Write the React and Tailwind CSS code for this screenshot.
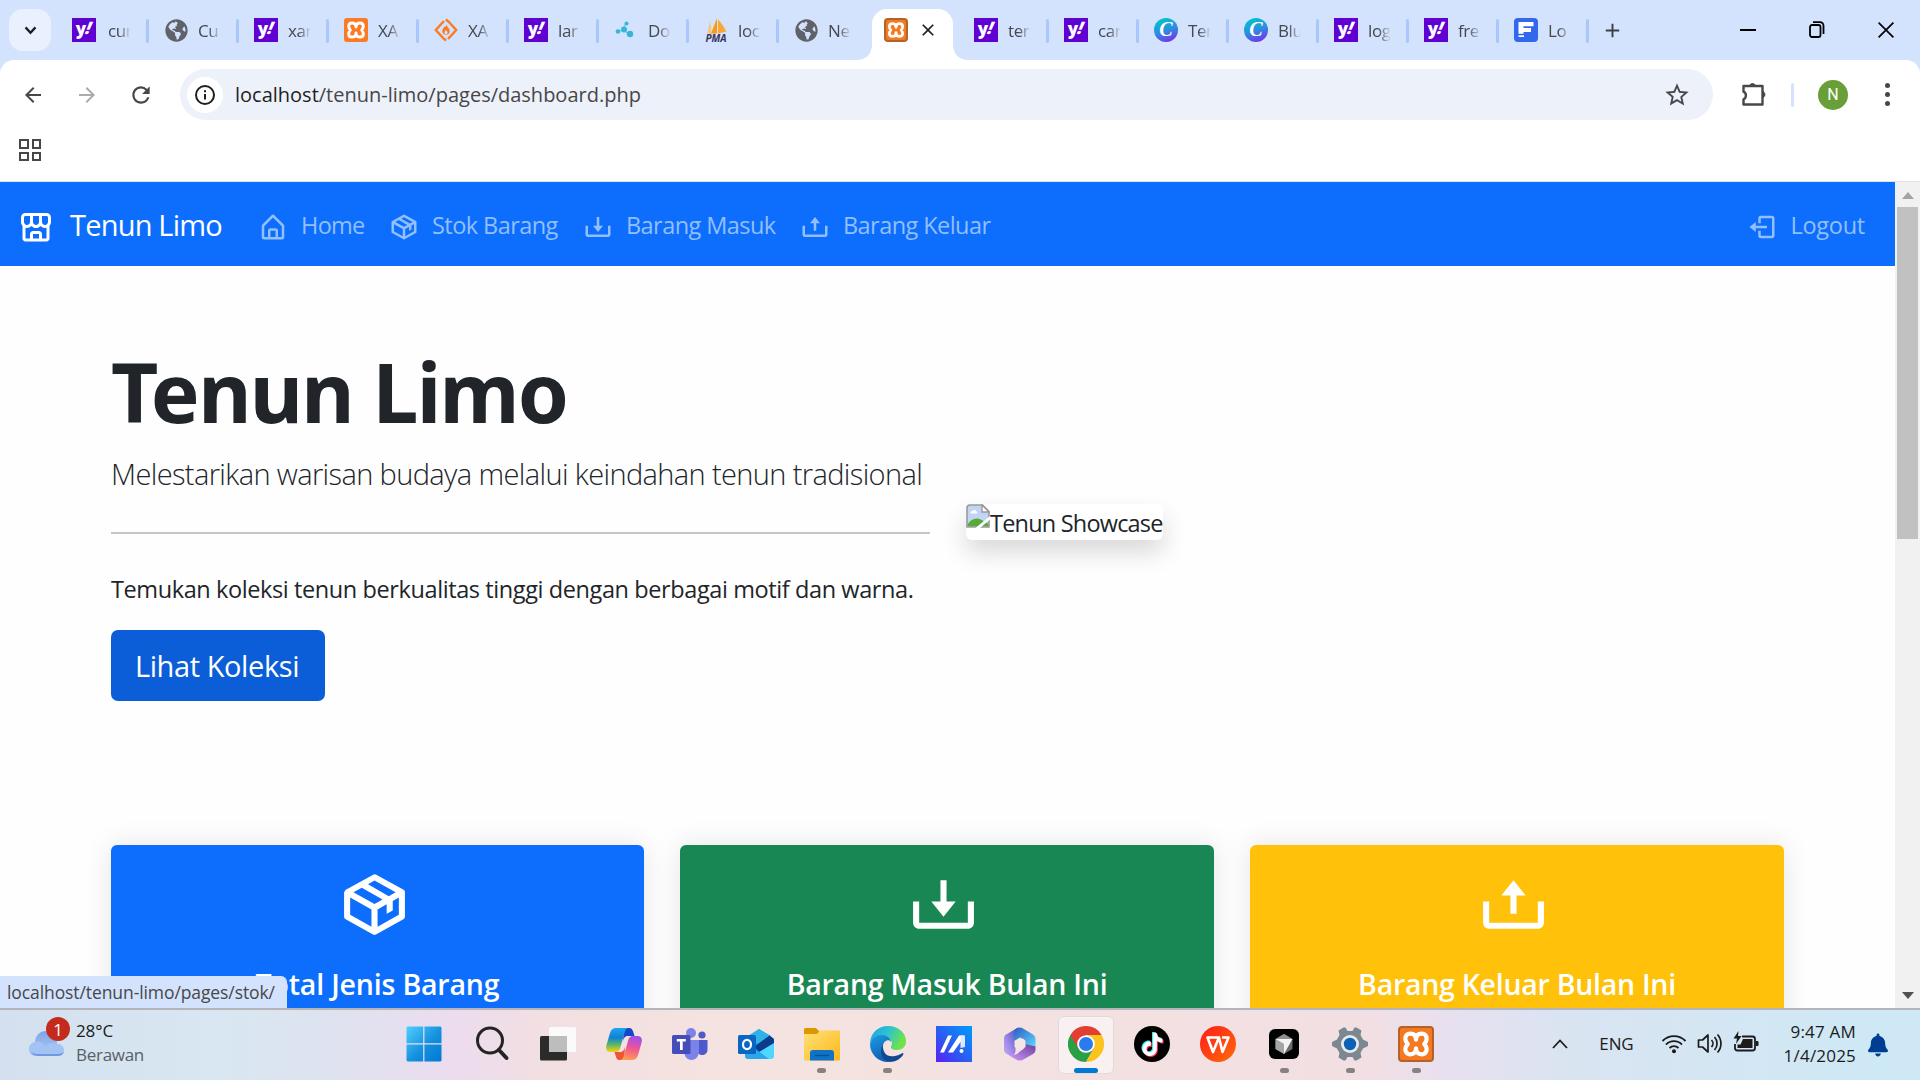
import React from "react";
import { BiStoreAlt, BiHomeAlt, BiPackage, BiDownload, BiUpload, BiLogOut } from "react-icons/bi";
import { FaGlobeAmericas, FaBell } from "react-icons/fa";
import { SiTiktok } from "react-icons/si";
import { MdArrowBack, MdArrowForward, MdRefresh, MdStarBorder, MdAdd, MdClose } from "react-icons/md";

/* ---------- favicons ---------- */

const Yahoo = () => (
  <span className="flex size-6 items-center justify-center bg-[#5f01d1] pb-[3px] pr-0.5 text-[17px] font-extrabold leading-none tracking-[-0.5px] text-white">
    y<i className="-skew-x-12 pb-0.5">!</i>
  </span>
);

const Globe = () => <FaGlobeAmericas className="size-[23px] text-[#5f6368]" />;

const XamppMark = () => (
  <svg viewBox="0 0 24 24" className="size-full" fill="none">
    <path
      d="M12 8.800C12 5.500 10 4.300 7.700 4.300 5.200 4.300 4 6 4 8c0 1.800.9 3 1.800 4C4.900 13 4 14.200 4 16c0 2.300 1.500 3.700 3.700 3.700 2.300 0 4.300-1.200 4.300-4.500 0 3.300 2 4.500 4.300 4.500 2.200 0 3.700-1.400 3.700-3.700 0-1.800-.9-3-1.800-4 .9-1 1.800-2.200 1.800-4 0-2-1.200-3.700-3.700-3.700C14 4.300 12 5.500 12 8.800z"
      stroke="#fff"
      strokeWidth="3.200"
      strokeLinejoin="round"
    />
  </svg>
);

const XamppFlat = () => (
  <span className="flex size-6 items-center justify-center rounded-[3px] bg-[#fb7a24] p-px">
    <XamppMark />
  </span>
);

function XamppGlossy({ className }) {
  return (
    <span className={"flex items-center justify-center rounded-[4px] border-2 border-[#b4622a] bg-[#f47920] " + className}>
      <XamppMark />
    </span>
  );
}

const Diamond = () => (
  <svg viewBox="0 0 24 24" className="size-6" fill="none">
    <path d="M10 3 1.8 12 10 21M14 3l8.2 9-8.2 9M12 1.4l2 2M12 22.6l-2-2" stroke="#fb7a24" strokeWidth="2.4" />
    <path d="M12.5 6.5c.6 2.6 3.2 3.6 3.2 6.6a3.7 3.7 0 0 1-7.4 0c0-2.300 1.600-3.100 1.900-4.300.9.600 2.100-.500 2.300-2.300z" fill="#fb7a24" />
    <path d="M12 12c1 1.200 1.500 1.800 1.500 2.800a1.500 1.500 0 0 1-3 0c0-1 .700-1.500 1.500-2.800z" fill="#d3e2fd" />
  </svg>
);

const Nodes = () => (
  <svg viewBox="0 0 24 24" className="size-6">
    <path d="M4 14 9 11.500 12 5M9.500 11.500l6 6" stroke="#7cc9e0" strokeWidth="1.200" fill="none" />
    <g fill="#35b6d8">
      <circle cx="4" cy="13.500" r="2.300" />
      <circle cx="10" cy="11.500" r="3" />
      <circle cx="12.500" cy="5.500" r="2" />
      <circle cx="16" cy="16" r="3.200" />
    </g>
  </svg>
);

const Pma = () => (
  <span className="flex h-6 w-6 flex-col items-center">
    <svg viewBox="0 0 24 16" className="h-4 w-6">
      <path d="M6 3 3.500 15.500h4z" fill="#fbc36b" />
      <path d="M13 0 7 15.500h6z" fill="#f89c0e" />
      <path d="M14 1.500c4 4 6 8 8.500 12l-8.500 2z" fill="#fba738" />
    </svg>
    <b className="text-[10px] italic leading-[8px] text-[#37355f]">PMA</b>
  </span>
);

const Canva = () => (
  <span className="flex size-6 items-center justify-center rounded-full bg-[linear-gradient(160deg,#00c4cc_10%,#2a8fe0_50%,#7d2ae8_95%)] pb-0.5 font-['Liberation_Serif',serif] text-[20px] font-bold italic leading-none text-white">
    C
  </span>
);

const Freepik = () => (
  <svg viewBox="0 0 24 24" className="size-6">
    <rect width="24" height="24" rx="4" fill="#3168ee" />
    <path d="M4.500 4h15v4.300H9.500V10H17v4H9.500v1.700h-5z" fill="#fff" />
    <path d="M4.500 17.300h5.500V19H4.500z" fill="#fff" />
  </svg>
);

function Tab({ icon: Icon, title, first, last }) {
  return (
    <div className="flex h-[42px] w-[90px] shrink-0 items-center">
      <div className={first ? "ml-[13px] mr-[2px] flex w-6 justify-center" : "ml-[15px] flex w-6 justify-center"}>
        <Icon />
      </div>
      <div className="ml-[10px] mt-0.5 h-[30px] w-[23px] overflow-hidden whitespace-nowrap text-[17px] leading-[30px] tracking-[-0.4px] text-[#45484d] [mask-image:linear-gradient(90deg,#000_45%,transparent_100%)]">
        {title}
      </div>
      {!last && <div className="ml-auto mt-0.5 h-6 w-[3px] rounded-full bg-[#a8c7fa]" />}
    </div>
  );
}

const leftTabs = [
  [Yahoo, "cur"],
  [Globe, "Cu"],
  [Yahoo, "xar"],
  [XamppFlat, "XA"],
  [Diamond, "XA"],
  [Yahoo, "lar"],
  [Nodes, "Do"],
  [Pma, "loc"],
  [Globe, "Ne"],
];

const rightTabs = [
  [Yahoo, "ter"],
  [Yahoo, "car"],
  [Canva, "Ter"],
  [Canva, "Blu"],
  [Yahoo, "log"],
  [Yahoo, "fre"],
  [Freepik, "Lo"],
];

function TabStrip() {
  return (
    <div className="flex h-[60px] items-start pt-[9px]">
      <button className="ml-[9px] mr-2 flex h-[42px] w-[42px] shrink-0 items-center justify-center rounded-[14px] bg-[#eaf1fe]">
        <svg viewBox="0 0 14 10" className="h-[9px] w-[13px]" fill="none" stroke="#1f1f1f" strokeWidth="2.600">
          <path d="m1.500 1.500 5.500 6 5.500-6" />
        </svg>
      </button>
      {leftTabs.map(([icon, title], i) => (
        <Tab key={i} icon={icon} title={title} first={i === 0} last={i === leftTabs.length - 1} />
      ))}
      <div className="relative ml-[3px] flex h-[51px] w-[81px] shrink-0 rounded-t-[15px] bg-white pl-3 pt-[9px]">
        <span className="absolute -left-[14px] bottom-0 size-[14px] bg-[radial-gradient(circle_at_0_0,transparent_13.500px,white_14px)]" />
        <span className="absolute -right-[14px] bottom-0 size-[14px] bg-[radial-gradient(circle_at_100%_0,transparent_13.500px,white_14px)]" />
        <XamppGlossy className="size-6" />
        <MdClose className="ml-[10px] mt-[2px] size-5 text-[#1f1f1f]" />
      </div>
      <div className="w-1.5 shrink-0" />
      {rightTabs.map(([icon, title], i) => (
        <Tab key={i} icon={icon} title={title} />
      ))}
      <MdAdd className="ml-3 mt-[10px] size-[23px] text-[#3c4043]" />
      <div className="ml-auto flex h-[42px] items-center text-black">
        <div className="mr-[53px] mt-[-1px] h-0.5 w-4 bg-black" />
        <svg viewBox="0 0 16 17" className="mr-[53px] mt-[-1px] h-[17px] w-4" fill="none" stroke="#000" strokeWidth="1.800">
          <rect x="1" y="4" width="10.500" height="12" rx="2" />
          <path d="M4 1.200h7a3.500 3.500 0 0 1 3.500 3.500v8.300" />
        </svg>
        <svg viewBox="0 0 16 16" className="mr-[26px] mt-[-1px] size-4" stroke="#000" strokeWidth="1.700">
          <path d="m.6.600 14.800 14.800M15.400.600.600 15.400" />
        </svg>
      </div>
    </div>
  );
}

function Toolbar() {
  return (
    <div className="h-[121px] rounded-t-[14px] bg-white pt-[9px]">
      <div className="flex h-[51px] items-center">
        <MdArrowBack className="ml-[21px] size-6 text-[#474747]" />
        <MdArrowForward className="ml-[30px] size-6 text-[#ababab]" />
        <MdRefresh className="ml-[29px] size-[26px] text-[#474747]" />
        <div className="ml-[26px] flex h-[51px] w-[1533px] items-center rounded-full bg-[#edf1fa]">
          <span className="ml-[7px] flex size-9 items-center justify-center rounded-full bg-white">
            <svg viewBox="0 0 22 22" className="size-[22px]" fill="none" stroke="#1f1f1f" strokeWidth="2">
              <circle cx="11" cy="11" r="9" />
              <path d="M11 10v5.500M11 6.200v2" />
            </svg>
          </span>
          <div className="ml-3 text-[20px] text-[#474747]">
            <span className="text-[#1f1f1f]">localhost</span>/tenun-limo/pages/dashboard.php
          </div>
          <MdStarBorder className="ml-auto mr-[22px] size-7 text-[#474747]" />
        </div>
        <svg viewBox="0 0 26 26" className="ml-7 mt-[-2px] size-[26px]" fill="none" stroke="#474747" strokeWidth="2.400" strokeLinejoin="round">
          <path d="M2.500 5h19v18.500h-19v-5.200a4.200 4.200 0 0 0 0-7.600z" />
          <path d="M8.500 4.500a3.300 3.300 0 0 1 6 0zM22 10.500a3.300 3.300 0 0 1 0 6z" fill="#474747" strokeWidth="1" />
        </svg>
        <div className="ml-6 h-6 w-[3px] rounded-full bg-[#d3e3fd]" />
        <div className="ml-6 flex size-[30px] items-center justify-center rounded-full bg-[#689f38] font-[Roboto,sans-serif] text-[16px] text-white">N</div>
        <div className="ml-[37px] flex flex-col gap-1">
          <span className="size-[5px] rounded-full bg-[#474747]" />
          <span className="size-[5px] rounded-full bg-[#474747]" />
          <span className="size-[5px] rounded-full bg-[#474747]" />
        </div>
      </div>
      <div className="ml-[19px] mt-[19px] grid w-[22px] grid-cols-2 gap-[3px]">
        <span className="h-[9.5px] w-[9.5px] border-[2.5px] border-[#474747]" />
        <span className="h-[9.5px] w-[9.5px] border-[2.5px] border-[#474747]" />
        <span className="h-[9.5px] w-[9.5px] border-[2.5px] border-[#474747]" />
        <span className="h-[9.5px] w-[9.5px] border-[2.5px] border-[#474747]" />
      </div>
    </div>
  );
}

/* ---------- web page ---------- */

function Navbar() {
  return (
    <nav className="flex h-[84px] items-center bg-[#0d6efd] text-[23.5px] tracking-[-0.56px] text-[#92bffe]">
      <BiStoreAlt className="ml-[18px] mt-[7px] size-9 text-white" />
      <span className="ml-4 mt-0.5 w-[176px] text-[29px] tracking-[-0.8px] text-white">Tenun Limo</span>
      <BiHomeAlt className="ml-3 mt-[5px] size-[30px]" />
      <span className="ml-[13px] mt-[4px] w-[76px] tracking-[-0.7px]">Home</span>
      <BiPackage className="ml-3 mt-[5px] size-[30px]" />
      <span className="ml-[13px] mt-[4px] w-[139px]">Stok Barang</span>
      <BiDownload className="ml-3 mt-[5px] size-[30px]" />
      <span className="ml-[13px] mt-[4px] w-[163px]">Barang Masuk</span>
      <BiUpload className="ml-[11px] mt-[5px] size-[30px]" />
      <span className="ml-[13px] mt-[4px]">Barang Keluar</span>
      <BiLogOut className="ml-auto mt-[5px] size-[30px]" />
      <span className="ml-[13px] mr-[30px] mt-[4px] tracking-[-0.25px]">Logout</span>
    </nav>
  );
}

const BrokenImage = () => (
  <svg viewBox="0 0 24 24" className="size-6 self-start">
    <path d="M1 4a3 3 0 0 1 3-3h12.500L23 7.500V23H1z" fill="#c3d5f5" stroke="#9a9a9a" strokeWidth="1.600" />
    <path d="M16 1v7h7z" fill="#fff" stroke="#9a9a9a" strokeWidth="1.400" />
    <path d="M4.500 9.500a2 2 0 0 1 2-2.500 2.200 2.200 0 0 1 4 .500 1.500 1.500 0 0 1 .500 2z" fill="#fff" />
    <path d="M1.800 22.200V20c3-4.500 8-7 13-4.500l7.400 4v2.700z" fill="#57ab37" />
    <path d="M24 12v3.500L14 24h-4.500z" fill="#fff" />
  </svg>
);

function Hero() {
  return (
    <section className="flex h-[579px] items-center gap-9 pb-[68px] pl-[111px] text-[#212529]">
      <div className="w-[819px]">
        <h1 className="h-[98px] font-['Noto_Sans',sans-serif] text-[82px] font-bold leading-[98px] tracking-[-1.7px]">Tenun Limo</h1>
        <p className="mt-[10px] h-[47px] whitespace-nowrap text-[29px] font-light leading-[47px] tracking-[-0.62px]">
          Melestarikan warisan budaya melalui keindahan tenun tradisional
        </p>
        <div className="mt-[35px] h-0.5 bg-[#c6c7c8]" />
        <p className="mt-9 h-[38px] whitespace-nowrap text-[23.5px] leading-[39px] tracking-[-0.4px]">
          Temukan koleksi tenun berkualitas tinggi dengan berbagai motif dan warna.
        </p>
        <button className="mt-[22px] block h-[71px] w-[214px] rounded-[7px] bg-[#0b5ed7] pr-0.5 text-[29px] tracking-[-0.4px] text-white">Lihat Koleksi</button>
      </div>
      <div className="flex h-9 w-[197px] items-center rounded-[6px] bg-white text-[23.5px] tracking-[-0.8px] shadow-[0_12.5px_25px_rgba(0,0,0,0.15)]">
        <BrokenImage />
        <span className="mt-0.5 whitespace-nowrap leading-9">Tenun Showcase</span>
      </div>
    </section>
  );
}

const cards = [
  { icon: BiPackage, title: "Total Jenis Barang", style: "bg-[#0d6efd] w-[533px] tracking-[-0.18px]" },
  { icon: BiDownload, title: "Barang Masuk Bulan Ini", style: "bg-[#198754] w-[534px] tracking-[-0.22px]" },
  { icon: BiUpload, title: "Barang Keluar Bulan Ini", style: "bg-[#ffc10a] w-[534px] tracking-[-0.27px]" },
];

function Cards() {
  return (
    <section className="flex gap-9 pl-[111px]">
      {cards.map(({ icon: Icon, title, style }) => (
        <div
          key={title}
          className={"flex h-[280px] flex-col items-center rounded-[6px] pt-[23px] text-white shadow-[0_0_28px_rgba(0,0,0,0.1)] " + style}
        >
          <Icon className="mr-[7px] size-[73px]" />
          <h5 className="mt-6 text-[28.5px] font-semibold leading-[38px]">{title}</h5>
        </div>
      ))}
    </section>
  );
}

function Scrollbar() {
  return (
    <div className="flex w-[25px] shrink-0 flex-col items-center bg-[#f1f1f1]">
      <svg viewBox="0 0 12 7" className="mt-[10px] h-[7px] w-3" fill="#a3a3a3"><path d="M6 0l6 7H0z" /></svg>
      <div className="mt-2 h-[332px] w-[21px] bg-[#c1c1c1]" />
      <svg viewBox="0 0 12 7" className="mb-[9px] mt-auto h-[7px] w-3" fill="#505050"><path d="M6 7 0 0h12z" /></svg>
    </div>
  );
}

/* ---------- taskbar ---------- */

const Start = () => (
  <svg viewBox="0 0 36 36" className="size-9 -translate-x-0.5">
    <defs>
      <linearGradient id="win" gradientUnits="userSpaceOnUse" x1="0" y1="0" x2="36" y2="36">
        <stop offset="0" stopColor="#52d1ff" />
        <stop offset="0.550" stopColor="#1490dd" />
        <stop offset="1" stopColor="#0078d4" />
      </linearGradient>
    </defs>
    <path d="M1.500.5h15.700v16.700H.500V1.500zM18.400.500h16.100l1 1v15.700H18.400zM.500 18.400h16.700v17.100H1.500l-1-1zM18.400 18.400h17.100v16.100l-1 1H18.400z" fill="url(#win)" />
  </svg>
);

const Search = () => (
  <svg viewBox="0 0 36 36" className="size-9" fill="none" stroke="#242424" strokeLinecap="round">
    <circle cx="16" cy="14.500" r="12.500" strokeWidth="3" />
    <path d="m25 24 7.500 8" strokeWidth="4" />
  </svg>
);

const TaskView = () => (
  <svg viewBox="0 0 36 36" className="size-9">
    <rect x="0" y="10" width="27" height="24.500" rx="1.500" fill="#2b2b2a" />
    <rect x="9" y="1" width="27" height="25" rx="1.500" fill="#fafafa" />
    <path d="M9 10h18v16H10.500L9 24.500z" fill="#bdbdbd" />
  </svg>
);

const Copilot = () => (
  <svg viewBox="0 0 36 36" className="size-9">
    <defs>
      <linearGradient id="cpa" x1="0" y1="0" x2="0" y2="1">
        <stop offset="0" stopColor="#1ba5f0" />
        <stop offset="0.400" stopColor="#1380d8" />
        <stop offset="0.700" stopColor="#5cba62" />
        <stop offset="1" stopColor="#ffcf0f" />
      </linearGradient>
      <linearGradient id="cpb" x1="0.500" y1="0" x2="0.300" y2="1">
        <stop offset="0" stopColor="#a34eec" />
        <stop offset="0.500" stopColor="#f0588f" />
        <stop offset="1" stopColor="#ffa04f" />
      </linearGradient>
    </defs>
    <path d="M18 2h5c2.500 0 3.500 1.500 4.200 3.800L28.500 10H22c-3 0-4 1.500-5 5z" fill="#1746c9" />
    <path d="M18 34h-4.500c-2.500 0-3-1.500-3.700-3.800L8.500 26H14c3 0 4-1.500 5-5z" fill="#ee5533" />
    <path d="M10 2h13c-3 0-3.800 2.500-4.500 5l-4 14c-1 3.500-2 5-5 5H4.500C.500 26-.500 23 .500 19L4 7c1-3.500 3-5 6-5z" fill="url(#cpa)" />
    <path d="M26 34H13.500c3 0 3.800-2.500 4.500-5l4-14c1-3.500 2-5 5-5h4.500c4 0 5 3 4 7L32 29c-1 3.500-3 5-6 5z" fill="url(#cpb)" />
  </svg>
);

const Teams = () => (
  <svg viewBox="0 0 36 36" className="size-9">
    <circle cx="19" cy="7" r="5" fill="#7b83eb" />
    <circle cx="30" cy="9" r="3.600" fill="#5059c9" />
    <path d="M25 14h10.500v9.500c0 3-2 5.500-5 5.500s-5.500-2-5.500-5z" fill="#5059c9" />
    <path d="M12 14h15v11c0 5-3 9-7.500 9S12 30 12 25z" fill="#7b83eb" />
    <rect x="0" y="9" width="18.500" height="19" rx="1.500" fill="#454db8" />
    <path d="M4.800 13h9v2.400h-3.100V24H8v-8.600H4.800z" fill="#fff" />
  </svg>
);

const Outlook = () => (
  <svg viewBox="0 0 36 36" className="size-9">
    <path d="M8 12 21 3l14 9v20H8z" fill="#28a8ea" />
    <path d="M10 10 21 3l12 7-12 9z" fill="#2fb2ea" />
    <path d="m17 20 14.500-10.500L36 13v6L21 29z" fill="#0a3c8c" />
    <path d="M8 33h25a3 3 0 0 0 3-3V17L18 28z" fill="#4fd8ff" />
    <path d="M7 24h12l12 9H10a3 3 0 0 1-3-3z" fill="#2ba6ea" />
    <rect x="0" y="9" width="18" height="19" rx="1.500" fill="#0a66c4" />
    <ellipse cx="9" cy="18.500" rx="4" ry="4.600" fill="none" stroke="#fff" strokeWidth="2.200" />
  </svg>
);

const Explorer = () => (
  <svg viewBox="0 0 36 36" className="size-9">
    <defs>
      <linearGradient id="fld" x1="0" y1="0" x2="1" y2="1">
        <stop offset="0" stopColor="#ffe07a" />
        <stop offset="1" stopColor="#fbb917" />
      </linearGradient>
    </defs>
    <path d="M0 3.500A1.500 1.500 0 0 1 1.500 2H12l4 4-4 4H0z" fill="#dc9800" />
    <path d="M0 8h13l3-3.500h19a1 1 0 0 1 1 1V33a1.500 1.500 0 0 1-1.500 1.500h-33A1.500 1.500 0 0 1 0 33z" fill="url(#fld)" />
    <path d="M6 34.500V27a3 3 0 0 1 3-3h18a3 3 0 0 1 3 3v7.500z" fill="#0f74c8" />
    <path d="M11 29.500h14" stroke="#0a4f94" strokeWidth="1.500" />
  </svg>
);

const Edge = () => (
  <svg viewBox="0 0 36 36" className="size-9">
    <defs>
      <linearGradient id="eda" x1="0" y1="0" x2="1" y2="0.400">
        <stop offset="0" stopColor="#1f9de8" />
        <stop offset="0.500" stopColor="#2bc3d2" />
        <stop offset="1" stopColor="#6ee24b" />
      </linearGradient>
      <linearGradient id="edb" x1="0" y1="0" x2="0.500" y2="1">
        <stop offset="0" stopColor="#1b9de2" />
        <stop offset="1" stopColor="#0f5cb0" />
      </linearGradient>
    </defs>
    <path d="M0 17C.500 7 8 0 18 0c11 0 18 7.500 18 15 0 6-4 9-9 9-4 0-6.500-1.500-6-3.500 2-3 1-7.500-4-8.500C10 10.500 2 12 0 17z" fill="url(#eda)" />
    <path d="M0 18c1-5 6-9 11.500-9 5 0 9 3 9.800 7-1-1.500-3-2-4.500-1.500-3 1-4.500 4.500-3.500 8.500 1.200 5.500 5.500 9.500 10.500 11-2 1.300-4 2-6 2C8 36 0 28 0 18z" fill="url(#edb)" />
    <path d="M13 18c-2 7 3 14 12 12 3-.500 5.500-1.800 7.500-3 1 0 1.200.800.500 2-3.500 5-8.500 7-13.500 6.800C12 34 8.500 26 13 18z" fill="#12488f" />
  </svg>
);

const MyAsus = () => (
  <svg viewBox="0 0 36 36" className="size-9">
    <defs>
      <linearGradient id="asu" x1="0" y1="1" x2="1" y2="0">
        <stop offset="0" stopColor="#5a1ef5" />
        <stop offset="0.450" stopColor="#2a5cf2" />
        <stop offset="1" stopColor="#009cff" />
      </linearGradient>
    </defs>
    <rect width="36" height="36" fill="url(#asu)" />
    <path d="m4 26.500 8-17h4l-8 17zM12 26.500l11-17h5v6.500h-3.500l-7.500 10.500z" fill="#fff" />
    <path d="M24.500 9.500H29V21l-4.500 1z" fill="#dfe9ff" />
    <circle cx="25.500" cy="25" r="2" fill="#fff" />
  </svg>
);

const M365 = () => (
  <svg viewBox="0 0 36 36" className="size-9">
    <defs>
      <linearGradient id="ma" x1="1" y1="0" x2="0" y2="1">
        <stop offset="0" stopColor="#3f4fb8" />
        <stop offset="0.600" stopColor="#9a86e8" />
        <stop offset="1" stopColor="#c9a8fa" />
      </linearGradient>
      <linearGradient id="mb" x1="0" y1="0" x2="1" y2="1">
        <stop offset="0" stopColor="#2e5bc0" />
        <stop offset="1" stopColor="#5fd8ff" />
      </linearGradient>
      <linearGradient id="mc" x1="0" y1="1" x2="1" y2="0">
        <stop offset="0" stopColor="#d59bff" />
        <stop offset="1" stopColor="#6a3f9e" />
      </linearGradient>
    </defs>
    <path d="M16 1.500 5 8a5 5 0 0 0-3 4.500v11c0 2 1 3.500 3 4.500l4 1.500c3 0 4.500-2 4.500-5V14c0-2 1-3.500 2.500-4.500z" fill="url(#ma)" />
    <path d="M14.500 2.500c2-1.300 4.500-1.300 6.500 0L31 8.500a5 5 0 0 1 2.500 4.500v8L23 18.500V16c0-2-1-3-2.500-3.500L12 15V6c0-1.500 1.300-2.800 2.500-3.500z" fill="url(#mb)" />
    <path d="M5 28l9.500 5.700c2 1.200 4.500 1.200 6.500 0L31 28c1.500-1 2.500-2.500 2.500-4.500v-3L23 18l-.500 3c-.500 1.500-1.500 2.500-3 3.300L15 28c-3 1.500-7 1.500-10 0z" fill="url(#mc)" />
    <path d="M18 11.500l5.500 3.300v6.200L18 24.300 12.500 21v-6.200z" fill="#f4e6e6" />
  </svg>
);

const Chrome = () => (
  <svg viewBox="0 0 36 36" className="size-9">
    <path d="M2.400 9A18 18 0 0 1 33.600 9H18z" fill="#e23e31" />
    <path d="M2.400 9A18 18 0 0 0 18 36l7.800-13.500L18 18z" fill="#2b9f48" />
    <path d="M33.600 9H18v9l7.800 4.500L18 36A18 18 0 0 0 33.600 9z" fill="#fcc31e" />
    <path d="M2.400 9 10.200 22.500 18 18V9z" fill="#e23e31" />
    <circle cx="18" cy="18" r="8.800" fill="#fff" />
    <circle cx="18" cy="18" r="7" fill="#2a7af0" />
  </svg>
);

const TikTok = () => (
  <span className="relative flex size-9 items-center justify-center rounded-full bg-black">
    <SiTiktok className="size-[23px] -translate-x-px -translate-y-px text-[#25f4ee]" />
    <SiTiktok className="absolute size-[23px] translate-x-px translate-y-px text-[#fe2c55]" />
    <SiTiktok className="absolute size-[23px] text-white" />
  </span>
);

const Wps = () => (
  <svg viewBox="0 0 36 36" className="size-9">
    <defs>
      <linearGradient id="wps" x1="0" y1="0" x2="1" y2="1">
        <stop offset="0" stopColor="#ff1a1a" />
        <stop offset="1" stopColor="#ff6d0a" />
      </linearGradient>
    </defs>
    <circle cx="18" cy="18" r="18" fill="url(#wps)" />
    <path d="M19 11.500H7.500l5.500 14.500 6-14.500 3.500 14.500 6-14.500H22" fill="none" stroke="#fff" strokeWidth="2.600" strokeLinejoin="round" />
  </svg>
);

const Cursor = () => (
  <svg viewBox="0 0 36 36" className="size-9">
    <rect x="3" y="3" width="30" height="30" rx="6" fill="#000" />
    <path d="m18 8 8.500 5v10L18 28l-8.500-5V13z" fill="#6b6b6b" />
    <path d="m18 8 8.500 5h-17z" fill="#8f8f8f" />
    <path d="m9.500 13 8.500 5v10l-8.500-5z" fill="#a5a5a5" />
    <path d="M9.500 13h17L18 28V18z" fill="#f4f4f4" />
  </svg>
);

const Settings = () => (
  <svg viewBox="0 0 36 36" className="size-9">
    <path
      d="M11.500 1.500h2l2 3.500h5l2-3.500h2l5 3-1 4.500 2.500 4.500L36 16v4l-5 2.500-2.500 4.500 1 4.500-5 3h-2l-2-3.500h-5l-2 3.500h-2l-5-3 1-4.500L5 22.500 0 20v-4l5-2.500L7.500 9l-1-4.500z"
      fill="#7c878f"
    />
    <circle cx="18" cy="18" r="9" fill="#e8eaec" />
    <circle cx="18" cy="18" r="6.200" fill="#0b62b8" />
  </svg>
);

const XamppApp = () => <XamppGlossy className="size-9" />;

const apps = [
  [Start], [Search], [TaskView], [Copilot], [Teams], [Outlook],
  [Explorer, "open"], [Edge, "open"], [MyAsus], [M365], [Chrome, "active"],
  [TikTok], [Wps], [Cursor, "open"], [Settings, "open"], [XamppApp, "open"],
];

function Taskbar() {
  return (
    <footer className="flex h-[72px] border-t-2 border-[#b3b5ba] bg-[linear-gradient(90deg,#d4e0ef_0px,#d8e7f1_220px,#dde3f0_320px,#ecdcee_460px,#f2dfe2_540px,#f4e3e0_720px,#f3e2e1_1000px,#f2dfe3_1370px,#e8e0f0_1450px,#dae4f1_1560px,#cfe8f5_1860px,#cfe8f5_1920px)]">
      <div className="flex w-[392.5px] shrink-0 items-start">
        <div className="relative ml-[29px] mt-[20px] h-7 w-9">
          <svg viewBox="0 0 36 28" className="h-7 w-9">
            <defs>
              <linearGradient id="cld" x1="0" y1="0" x2="0" y2="1">
                <stop offset="0" stopColor="#7ea4e6" />
                <stop offset="1" stopColor="#a9c9f7" />
              </linearGradient>
            </defs>
            <circle cx="17" cy="12" r="11" fill="url(#cld)" />
            <path d="M7 26a7 7 0 0 1-.5-14c4-1 8 1 10 5 3-4 8-5 12-3a6 6 0 0 1 1 12z" fill="#a3c3f5" />
            <path d="M2 22c2 3.500 5 4 8 4h18c4 0 6-1.500 7-4-3 2-6 2-9 2H11c-3 0-6 0-9-2z" fill="#6f98e0" />
          </svg>
          <span className="absolute -top-[13px] left-[17px] flex size-6 items-center justify-center rounded-full bg-[#c42b1c] text-[17px] leading-none text-white">1</span>
        </div>
        <div className="ml-[11px] mt-[9px] text-[17px] leading-6 tracking-[-0.1px] text-[#1b1b1b]">
          <div>28°C</div>
          <div className="tracking-[-0.28px] text-[#5a5f66]">Berawan</div>
        </div>
      </div>
      {apps.map(([Icon, state], i) => (
        <div key={i} className="flex w-[66.05px] shrink-0 justify-center pt-1.5">
          <div
            className={
              state === "active"
                ? "flex h-[58px] w-14 flex-col items-center rounded-[6px] border border-[#e6d8da] bg-[#f9f1f1] pt-[9px]"
                : "flex h-[58px] w-14 flex-col items-center pt-[10px]"
            }
          >
            <Icon />
            {state === "active" && <span className="mt-[6px] h-[5px] w-6 shrink-0 rounded-full bg-[#0078d4]" />}
            {state === "open" && <span className="mt-[6px] h-[5px] w-[9px] shrink-0 rounded-full bg-[#8a8080]" />}
          </div>
        </div>
      ))}
      <div className="ml-auto flex h-[70px] items-center text-[17px] text-[#1b1b1b]">
        <svg viewBox="0 0 16 10" className="mr-[31px] mt-[-2px] h-[10px] w-4" fill="none" stroke="#1b1b1b" strokeWidth="1.800">
          <path d="m1 9 7-7.500L15 9" />
        </svg>
        <span className="mr-[27px] mt-[-2px] tracking-[-0.1px]">ENG</span>
        <svg viewBox="0 0 26 22" className="mr-[10px] mt-[-4px] h-[22px] w-[26px]" fill="none" stroke="#1b1b1b" strokeWidth="1.800">
          <path d="M1.500 9a16 16 0 0 1 23 0M5 12.600a11 11 0 0 1 16 0M8.500 16a6.500 6.500 0 0 1 9 0" />
          <circle cx="13" cy="19.200" r="2" fill="#1b1b1b" stroke="none" />
        </svg>
        <svg viewBox="0 0 26 22" className="mr-[10px] mt-[-4px] h-[22px] w-[26px]" fill="none" stroke="#1b1b1b" strokeWidth="1.700" strokeLinejoin="round">
          <path d="M1.500 8h4L11 3v17l-5.500-5h-4zM14.500 8a5 5 0 0 1 0 7M17.500 5a9.500 9.500 0 0 1 0 13M20.500 2.500a13.500 13.500 0 0 1 0 18" />
        </svg>
        <svg viewBox="0 0 26 22" className="mr-[25px] mt-[-7px] h-[22px] w-[26px]">
          <path d="M9 5.500h10.500a2.500 2.500 0 0 1 2.500 2.500v9a2.500 2.500 0 0 1-2.500 2.500h-15A2.500 2.500 0 0 1 2 17v-4" fill="none" stroke="#1b1b1b" strokeWidth="1.800" />
          <path d="M10 8h9.500v9h-15v-3.500h3zM23 10h1.500a1 1 0 0 1 1 1v3a1 1 0 0 1-1 1H23zM5.500 0 .5 7.500H4L3 13l5.500-8H5z" fill="#1b1b1b" />
        </svg>
        <div className="mr-3 mt-[-3px] text-right leading-6 tracking-[0.2px]">
          <div>9:47 AM</div>
          <div>1/4/2025</div>
        </div>
        <FaBell className="mr-8 mt-[-1px] h-6 w-5 text-[#003e92]" />
      </div>
    </footer>
  );
}

export default function App() {
  return (
    <div className="flex h-[1080px] w-[1920px] flex-col overflow-hidden bg-[#d3e2fd] font-['Open_Sans','Noto_Sans',sans-serif]">
      <TabStrip />
      <Toolbar />
      <div className="h-px shrink-0 bg-[#dfe1e5]" />
      <div className="relative flex h-[826px] shrink-0">
        <main className="h-[826px] w-[1895px] overflow-hidden bg-[#fefefe]">
          <Navbar />
          <Hero />
          <Cards />
        </main>
        <Scrollbar />
        <div className="absolute bottom-0 left-0 flex h-8 w-[287px] items-center rounded-tr-[6px] bg-[#d3e3fd] pl-[7px] text-[17.5px] tracking-[-0.09px] text-[#474747]">
          localhost/tenun-limo/pages/stok/
        </div>
      </div>
      <Taskbar />
    </div>
  );
}
